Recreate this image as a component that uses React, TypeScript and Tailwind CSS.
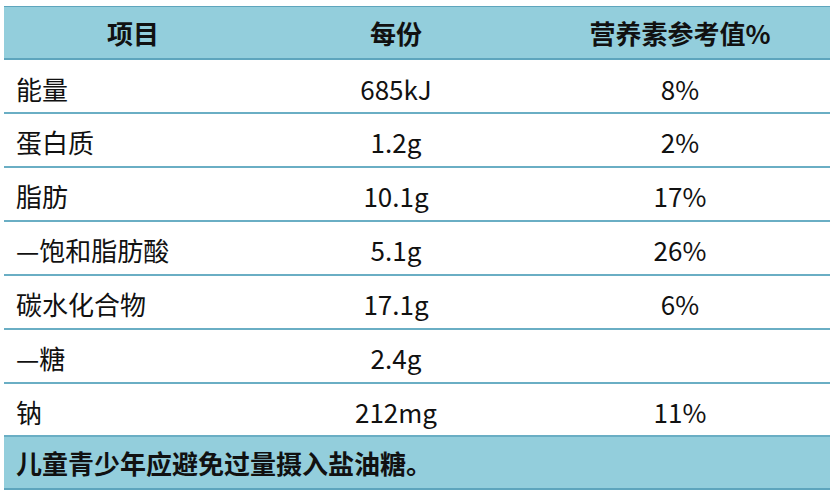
const rows: [string, string, string][] = [
  ["能量", "685kJ", "8%"],
  ["蛋白质", "1.2g", "2%"],
  ["脂肪", "10.1g", "17%"],
  ["—饱和脂肪酸", "5.1g", "26%"],
  ["碳水化合物", "17.1g", "6%"],
  ["—糖", "2.4g", ""],
  ["钠", "212mg", "11%"],
];

const font = { fontFamily: '"Noto Sans CJK SC", "Noto Sans", sans-serif' };

export default function App() {
  return (
    <div className="w-[833px] h-[495px] bg-white pt-[6px] pl-[4px]" style={font}>
      <div className="w-[826px] text-[26px] text-[#111]">
        <div className="grid grid-cols-[258px_268px_300px] h-[54px] bg-[#93cedc] border-t border-b-2 border-[#5ea5bd] font-bold items-center">
          <div className="text-center">项目</div>
          <div className="text-center">每份</div>
          <div className="text-center">营养素参考值%</div>
        </div>
        {rows.map((r, i) => (
          <div
            key={i}
            className={`grid grid-cols-[258px_268px_300px] ${i === 1 || i === 6 ? "h-[53.5px]" : "h-[54px]"} border-b-2 border-[#6aaec4] items-center pt-[4px]`}
          >
            <div className="pl-[12px]">{r[0]}</div>
            <div className="text-center">{r[1]}</div>
            <div className="text-center">{r[2]}</div>
          </div>
        ))}
        <div className="h-[53px] bg-[#93cedc] border-b-2 border-[#5ea5bd] font-bold flex items-center pl-[12px]">
          儿童青少年应避免过量摄入盐油糖。
        </div>
      </div>
    </div>
  );
}
